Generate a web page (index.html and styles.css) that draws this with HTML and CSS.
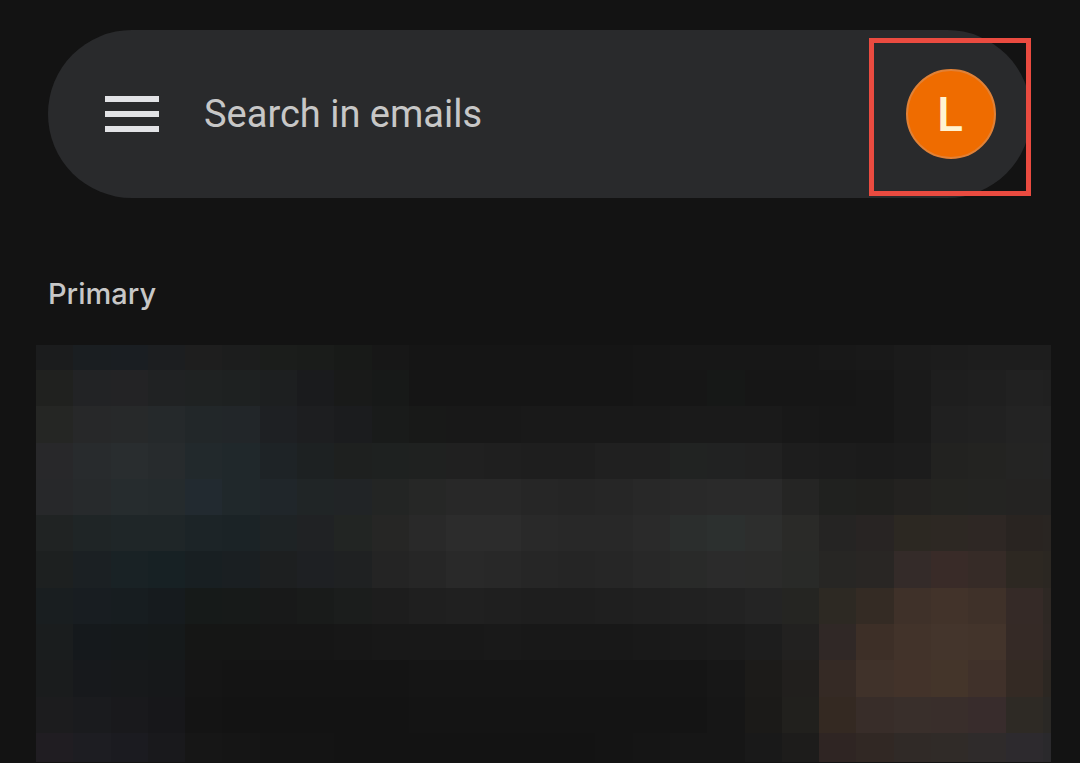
FILE: index.html
```html
<!DOCTYPE html>
<html lang="en">
<head>
<meta charset="utf-8">
<meta name="viewport" content="width=device-width, initial-scale=1">
<title>Inbox</title>
<link rel="stylesheet" href="styles.css">
</head>
<body>
<header class="topbar">
  <form class="search" role="search">
    <button class="menu" type="button" aria-label="Open menu">
      <svg viewBox="0 0 54 36" width="54" height="36" aria-hidden="true" shape-rendering="crispEdges"><path d="M0 0h54v6H0zM0 15h54v6H0zM0 30h54v6H0z" fill="currentColor"/></svg>
    </button>
    <input class="field" type="search" aria-label="Search in emails" placeholder="Search in emails">
    <button class="avatar" type="button" aria-label="Account L">L</button>
    <span class="highlight"></span>
  </form>
</header>
<main class="inbox">
  <h1 class="section">Primary</h1>
  <div class="mosaic" id="mosaic" aria-hidden="true"></div>
</main>
<script src="mosaic.js"></script>
</body>
</html>
```
FILE: styles.css
```css
* { box-sizing: border-box; }

body {
  margin: 0;
  min-height: 100vh;
  display: flex;
  flex-direction: column;
  background: #131313;
  color: #c7c7c7;
  font-family: Roboto, "Liberation Sans", sans-serif;
}

.topbar { padding: 30px 49px 0 48px; }

.search {
  position: relative;
  display: flex;
  align-items: center;
  gap: 45px;
  margin: 0;
  padding: 39px 35px 39px 57px;
  border-radius: 84px;
  background: #292a2c;
}

.menu,
.avatar {
  flex: none;
  padding: 0;
  border: 0;
  cursor: pointer;
}

.menu {
  display: flex;
  background: none;
  color: #e2e3e6;
}

.field {
  flex: 1;
  min-width: 0;
  height: 60px;
  padding: 0;
  border: 0;
  outline: 0;
  background: none;
  color: #c7c7c7;
  font: 400 38px/60px Roboto, "Liberation Sans", sans-serif;
}

.field::placeholder { color: #c7c7c7; opacity: 1; }

.avatar {
  width: 90px;
  height: 90px;
  padding: 2px 2px 0 0;
  border: 2px solid #e18136;
  border-radius: 50%;
  background: #ef6c00;
  color: #fff3d2;
  font: 500 48px/84px Roboto, "Liberation Sans", sans-serif;
}

.highlight {
  position: absolute;
  top: 8px;
  right: 0;
  width: 162px;
  height: 158px;
  border: 5px solid #ea4b40;
  pointer-events: none;
}

.inbox {
  flex: 1;
  display: flex;
  flex-direction: column;
  padding: 76px 29px 1px 36px;
}

.section {
  margin: 0 0 31px;
  padding-left: 12px;
  font: 500 29px/40px Inter, Roboto, sans-serif;
}

.mosaic {
  flex: 1;
  min-height: 417px;
  display: grid;
  grid-template-columns: repeat(27, 37fr) 8fr;
  grid-template-rows: 25fr repeat(10, 36fr) 29fr;
}
```
FILE: mosaic.js
```js
// One line per row of blocks, one colour per column.
const rows = [
  "1b1c1d 1a1e21 1a1e22 1c1e20 1e1e1e 1c1d1d 1b1d1b 1a1c1a 181a18 171717 151515 151515 151515 151515 151515 151515 161616 171717 171717 171717 171717 181818 191919 1b1b1b 1c1c1c 1d1d1d 1d1d1d 1d1d1d",
  "20211f 222325 232325 202223 1f2222 1e2121 1d1f20 1a1b1d 191a19 171918 151515 151515 151515 151515 151515 151515 161616 161616 161817 161616 161616 161616 171717 1a1a1a 1e1e1e 1f1f1f 212121 202020",
  "252624 272829 27292a 25292b 222729 222629 1e2023 1d1e20 1b1c1e 191b1a 181918 181818 181818 191919 191919 191919 191919 1a1a1a 1a1a1a 1a1a1a 181818 171717 171717 1a1a1a 202020 212121 232323 232323",
  "28282a 282b2d 292d2f 272b2d 22292c 20282b 1e2326 1d2122 1e201f 1e2120 1f2120 202020 1f1f1f 1e1e1e 1e1e1e 202020 202020 212322 212222 212121 1d1d1d 1c1c1c 1b1b1b 1c1c1c 222220 232321 242423 242424",
  "27282a 272a2c 262c2e 252b2d 222a30 20282b 20262a 202526 212426 232524 262726 282828 282828 262626 252525 262626 282828 292929 2a2a2a 2a2a2a 252524 20211f 20201e 232220 242421 242422 242322 242322",
  "202323 1f2526 1f2628 1f2628 1c2427 1b2326 1e2325 202224 222523 262625 292929 2c2c2c 2c2c2c 292929 282828 282828 2a2a2a 2b2e2d 2c302f 2d2e2d 2a2a28 252423 282423 2c2822 2d2823 2e2724 292421 292522",
  "1d2020 1b2023 192225 172124 181f22 1a1f22 1d1f20 1e2023 1f2122 242424 262626 292929 282828 262626 252525 262626 282828 292a29 2b2b2b 2b2b2a 292a28 272624 292624 342b29 392b28 362b27 2d2822 2b2722",
  "191e20 181d21 171d20 161b1e 161a19 171a19 181919 191b1a 1b1d1c 1d1d1d 1f1f1f 202020 1f1f1f 1e1e1e 1e1e1e 1f1f1f 202020 212121 222222 242424 252522 2d2923 342b24 3f3129 42332a 3f3129 352a27 2e2824",
  "1a1d1e 15191c 15191b 15191a 151615 151615 161616 161616 171717 181818 181818 181818 191919 181818 181818 181818 191919 1a1a1a 1b1b1b 1d1d1d 222120 302826 3d2f27 42332a 44352c 43342b 352a26 2f2825",
  "1a1c1d 17191c 17191b 16181a 151515 141414 141414 141414 141414 141414 151515 151515 151515 151515 151515 151515 151515 151515 171717 1c1b19 211f1d 352a25 40322a 43332a 44352a 40312a 342a24 2c2722",
  "1c1c1e 1a1b1e 19191c 17171a 141414 131313 131313 131313 131313 131313 141414 141414 141414 141414 141414 141414 141414 141414 161616 1b1a18 21201d 342922 382d29 392f2b 392e2b 382c2c 2e2a25 2a2825",
  "201d22 1d1d22 1b1b20 19191c 161616 151515 141414 141414 131313 131313 131313 131313 131313 131313 131313 141414 151515 161616 161616 191919 1d1c1b 2f2523 312824 302a27 302b28 2f2b2b 2d2a2e 2a292c"
];

const mosaic = document.getElementById("mosaic");
for (const row of rows) {
  for (const colour of row.split(" ")) {
    const block = document.createElement("span");
    block.style.backgroundColor = "#" + colour;
    mosaic.append(block);
  }
}
```
